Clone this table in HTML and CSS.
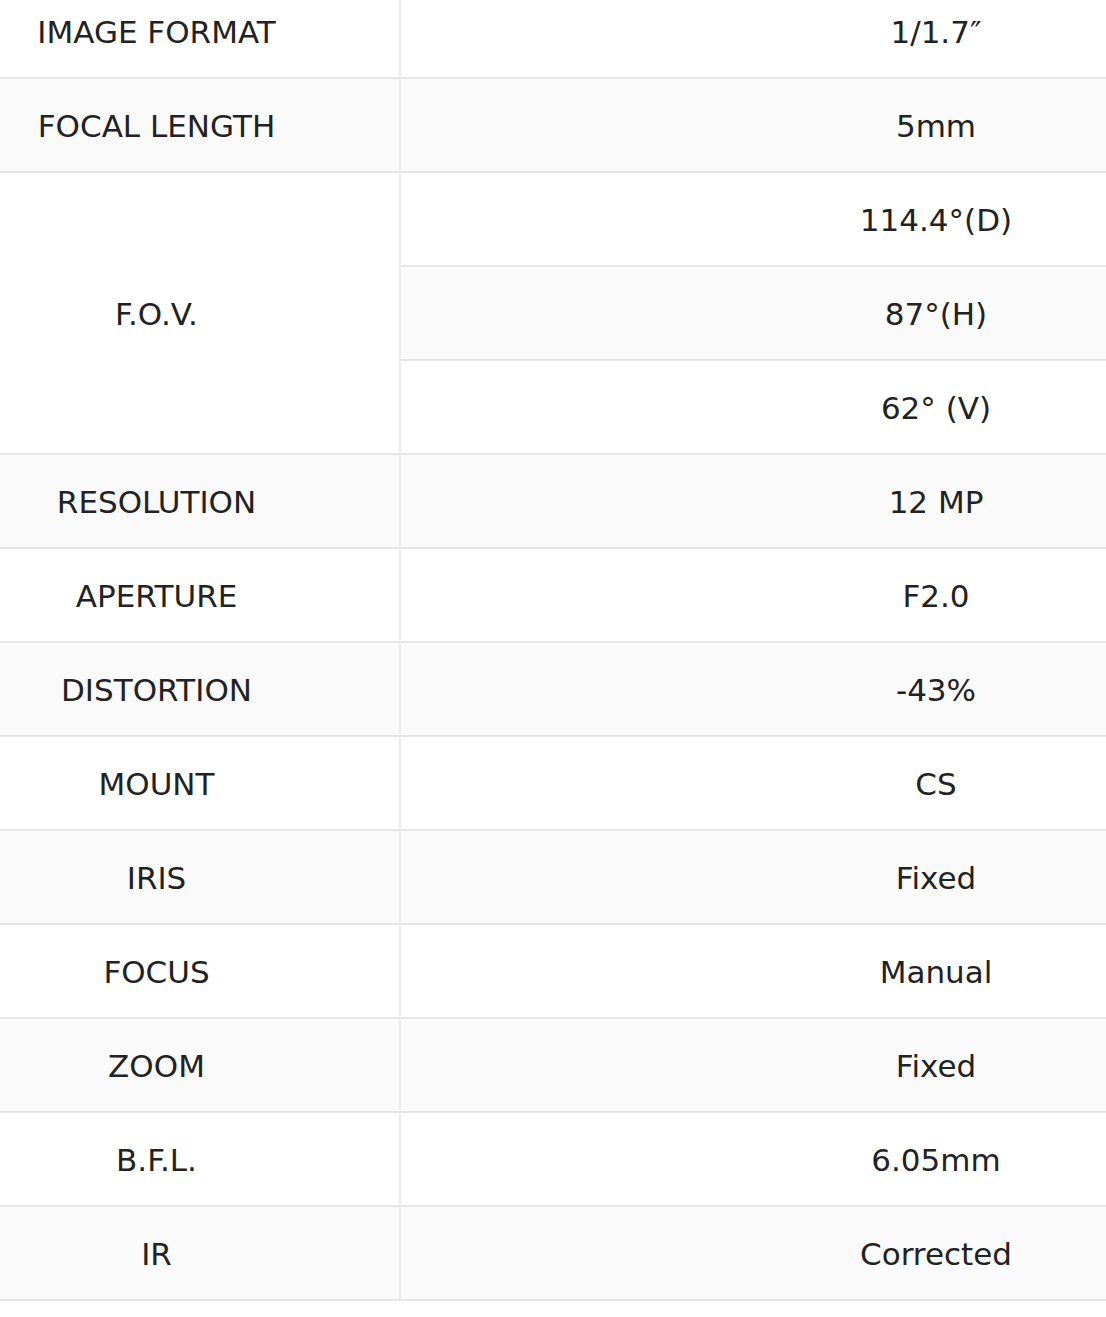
FILE: index.html
```html
<!DOCTYPE html>
<html lang="en">
<head>
<meta charset="utf-8">
<title>Lens Specifications</title>
<link rel="stylesheet" href="styles.css">
</head>
<body>
<table class="spec">
  <tbody>
    <tr><td class="key">IMAGE FORMAT</td><td class="val">1/1.7″</td></tr>
    <tr><td class="key">FOCAL LENGTH</td><td class="val">5mm</td></tr>
    <tr><td class="key" rowspan="3">F.O.V.</td><td class="val">114.4°(D)</td></tr>
    <tr><td class="val">87°(H)</td></tr>
    <tr><td class="val">62° (V)</td></tr>
    <tr><td class="key">RESOLUTION</td><td class="val">12 MP</td></tr>
    <tr><td class="key">APERTURE</td><td class="val">F2.0</td></tr>
    <tr><td class="key">DISTORTION</td><td class="val">-43%</td></tr>
    <tr><td class="key">MOUNT</td><td class="val">CS</td></tr>
    <tr><td class="key">IRIS</td><td class="val">Fixed</td></tr>
    <tr><td class="key">FOCUS</td><td class="val">Manual</td></tr>
    <tr><td class="key">ZOOM</td><td class="val">Fixed</td></tr>
    <tr><td class="key">B.F.L.</td><td class="val">6.05mm</td></tr>
    <tr><td class="key">IR</td><td class="val">Corrected</td></tr>
  </tbody>
</table>
</body>
</html>
```

FILE: styles.css
```css
html, body {
  margin: 0;
  padding: 0;
  background: #ffffff;
  overflow: hidden;
}

.spec {
  width: 1106px;
  margin-top: -15px;
  border-collapse: separate;
  border-spacing: 0;
  table-layout: fixed;
  font-family: "DejaVu Sans", Verdana, sans-serif;
  font-size: 31px;
  color: #222222;
}

.spec td {
  height: 94px;
  padding: 2px 0 0 0;
  box-sizing: border-box;
  text-align: center;
  vertical-align: middle;
  border-bottom: 2px solid #e6e6e6;
  line-height: 1;
  white-space: nowrap;
}

.spec tr:nth-child(even) td {
  background: #fafafa;
}

.spec .key {
  width: 401px;
  padding-right: 86px;
  border-right: 2px solid #ececec;
}

.spec .val {
  padding-left: 365px;
}
```
